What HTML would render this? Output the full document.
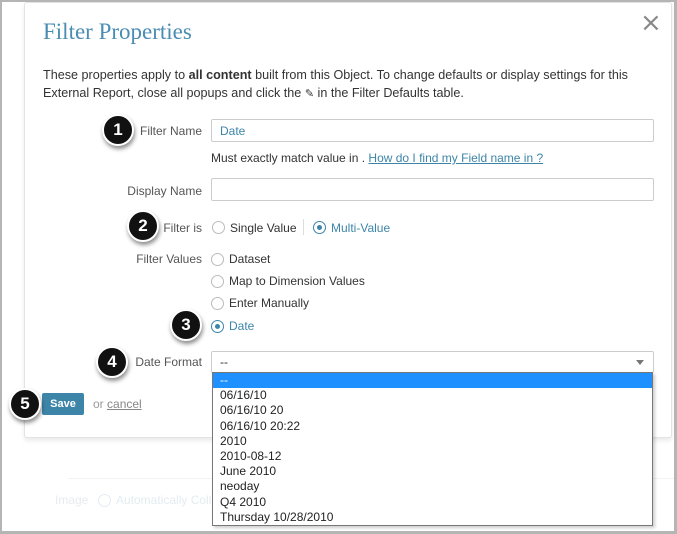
<!DOCTYPE html>
<html><head><style>
*{margin:0;padding:0;box-sizing:border-box}
body{width:677px;height:534px;overflow:hidden;background:#fff;font-family:"Liberation Sans",Arial,sans-serif;position:relative;color:#333}
.frame{position:absolute;left:0;top:0;width:677px;height:534px;border:2px solid #b5b5b5;border-right-width:3px;border-bottom-width:3px;pointer-events:none;z-index:20}
.modal{position:absolute;left:24px;top:2px;width:648px;height:436px;background:#fff;border:1px solid #e3e3e3;border-radius:3px;box-shadow:0 3px 4px rgba(0,0,0,.08)}
.t{position:absolute;font-size:12px;white-space:nowrap}
.lbl{position:absolute;font-size:12px;color:#555;text-align:right;width:120px;left:82px}
.inp{position:absolute;left:211px;width:443px;height:23px;border:1px solid #ccc;border-radius:2px;background:#fff;font-size:12px;padding:4px 8px}
.r{position:absolute;width:13px;height:13px;border:1px solid #bbb;border-radius:50%;background:#fff}
.r.on{border-color:#3d85a8}
.r.on::after{content:"";position:absolute;left:3px;top:3px;width:5px;height:5px;border-radius:50%;background:#3d85a8}
.b{position:absolute;width:32px;height:32px;border-radius:50%;background:#111;border:2px solid #fff;box-shadow:1px 3px 4px rgba(0,0,0,.45);color:#fff;font-size:17px;font-weight:bold;text-align:center;line-height:28px;z-index:10}
.dd{position:absolute;left:212px;top:372px;width:441px;height:154px;background:#fff;border:1px solid #777;box-shadow:2px 2px 3px rgba(0,0,0,.2);z-index:5;font-size:12px}
.dd div{height:15.2px;line-height:15px;padding-left:7px;color:#222}
.dd div.sel{background:#1e90ff;color:#fff}
</style></head><body>
<div class="frame"></div>
<div style="position:absolute;left:68px;top:478px;width:609px;height:1px;background:#f3f3f3"></div>
<div class="t" style="left:55px;top:493px;color:#e6ecef">Image</div>
<div class="r" style="left:98px;top:494px;border-color:#e3ecf1"></div>
<div class="t" style="left:116px;top:493px;color:#e3ecf1">Automatically Collect</div>

<div class="modal"></div>
<div class="t" style="left:43px;top:19px;font-family:'Liberation Serif',serif;font-size:23px;color:#4a8db3">Filter Properties</div>
<div class="t" style="left:640px;top:8px;font-size:26px;color:#888;font-family:'DejaVu Sans',sans-serif">×</div>
<div class="t" style="left:43px;top:66px;line-height:18px;font-size:12.6px">These properties apply to <b>all content</b> built from this Object. To change defaults or display settings for this<br>External Report, close all popups and click the <span style="font-size:11px">✎</span> in the Filter Defaults table.</div>

<div class="lbl" style="top:124px">Filter Name</div>
<div class="inp" style="top:119px;color:#3d85a8">Date</div>
<div class="t" style="left:211px;top:151px">Must exactly match value in . <span style="color:#3d85a8;text-decoration:underline">How do I find my Field name in ?</span></div>

<div class="lbl" style="top:184px">Display Name</div>
<div class="inp" style="top:178px"></div>

<div class="lbl" style="top:221px">Filter is</div>
<div class="r" style="left:212px;top:221px"></div>
<div class="t" style="left:230px;top:221px">Single Value</div>
<div style="position:absolute;left:303px;top:219px;width:1px;height:16px;background:#ddd"></div>
<div class="r on" style="left:313px;top:221px"></div>
<div class="t" style="left:331px;top:221px;color:#3d85a8">Multi-Value</div>

<div class="lbl" style="top:252px">Filter Values</div>
<div class="r" style="left:211px;top:253px"></div><div class="t" style="left:229px;top:252px">Dataset</div>
<div class="r" style="left:211px;top:275px"></div><div class="t" style="left:229px;top:274px">Map to Dimension Values</div>
<div class="r" style="left:211px;top:297px"></div><div class="t" style="left:229px;top:296px">Enter Manually</div>
<div class="r on" style="left:211px;top:320px"></div><div class="t" style="left:229px;top:319px;color:#3d85a8">Date</div>

<div class="lbl" style="top:355px">Date Format</div>
<div class="inp" style="top:351px;height:22px;padding-top:3px">--<span style="position:absolute;right:9px;top:8px;border-left:4px solid transparent;border-right:4px solid transparent;border-top:5px solid #777"></span></div>
<div class="dd">
<div class="sel">--</div><div>06/16/10</div><div>06/16/10 20</div><div>06/16/10 20:22</div><div>2010</div><div>2010-08-12</div><div>June 2010</div><div>neoday</div><div>Q4 2010</div><div>Thursday 10/28/2010</div>
</div>

<div style="position:absolute;left:42px;top:393px;width:42px;height:22px;background:#3d85a8;border-radius:2px;color:#fff;font-size:11px;font-weight:bold;text-align:center;line-height:22px">Save</div>
<div class="t" style="left:93px;top:397px;color:#999">or <span style="text-decoration:underline;color:#888">cancel</span></div>

<div class="b" style="left:102px;top:114px">1</div>
<div class="b" style="left:127px;top:210px">2</div>
<div class="b" style="left:170px;top:309px">3</div>
<div class="b" style="left:96px;top:346px">4</div>
<div class="b" style="left:9px;top:388px">5</div>
</body></html>
